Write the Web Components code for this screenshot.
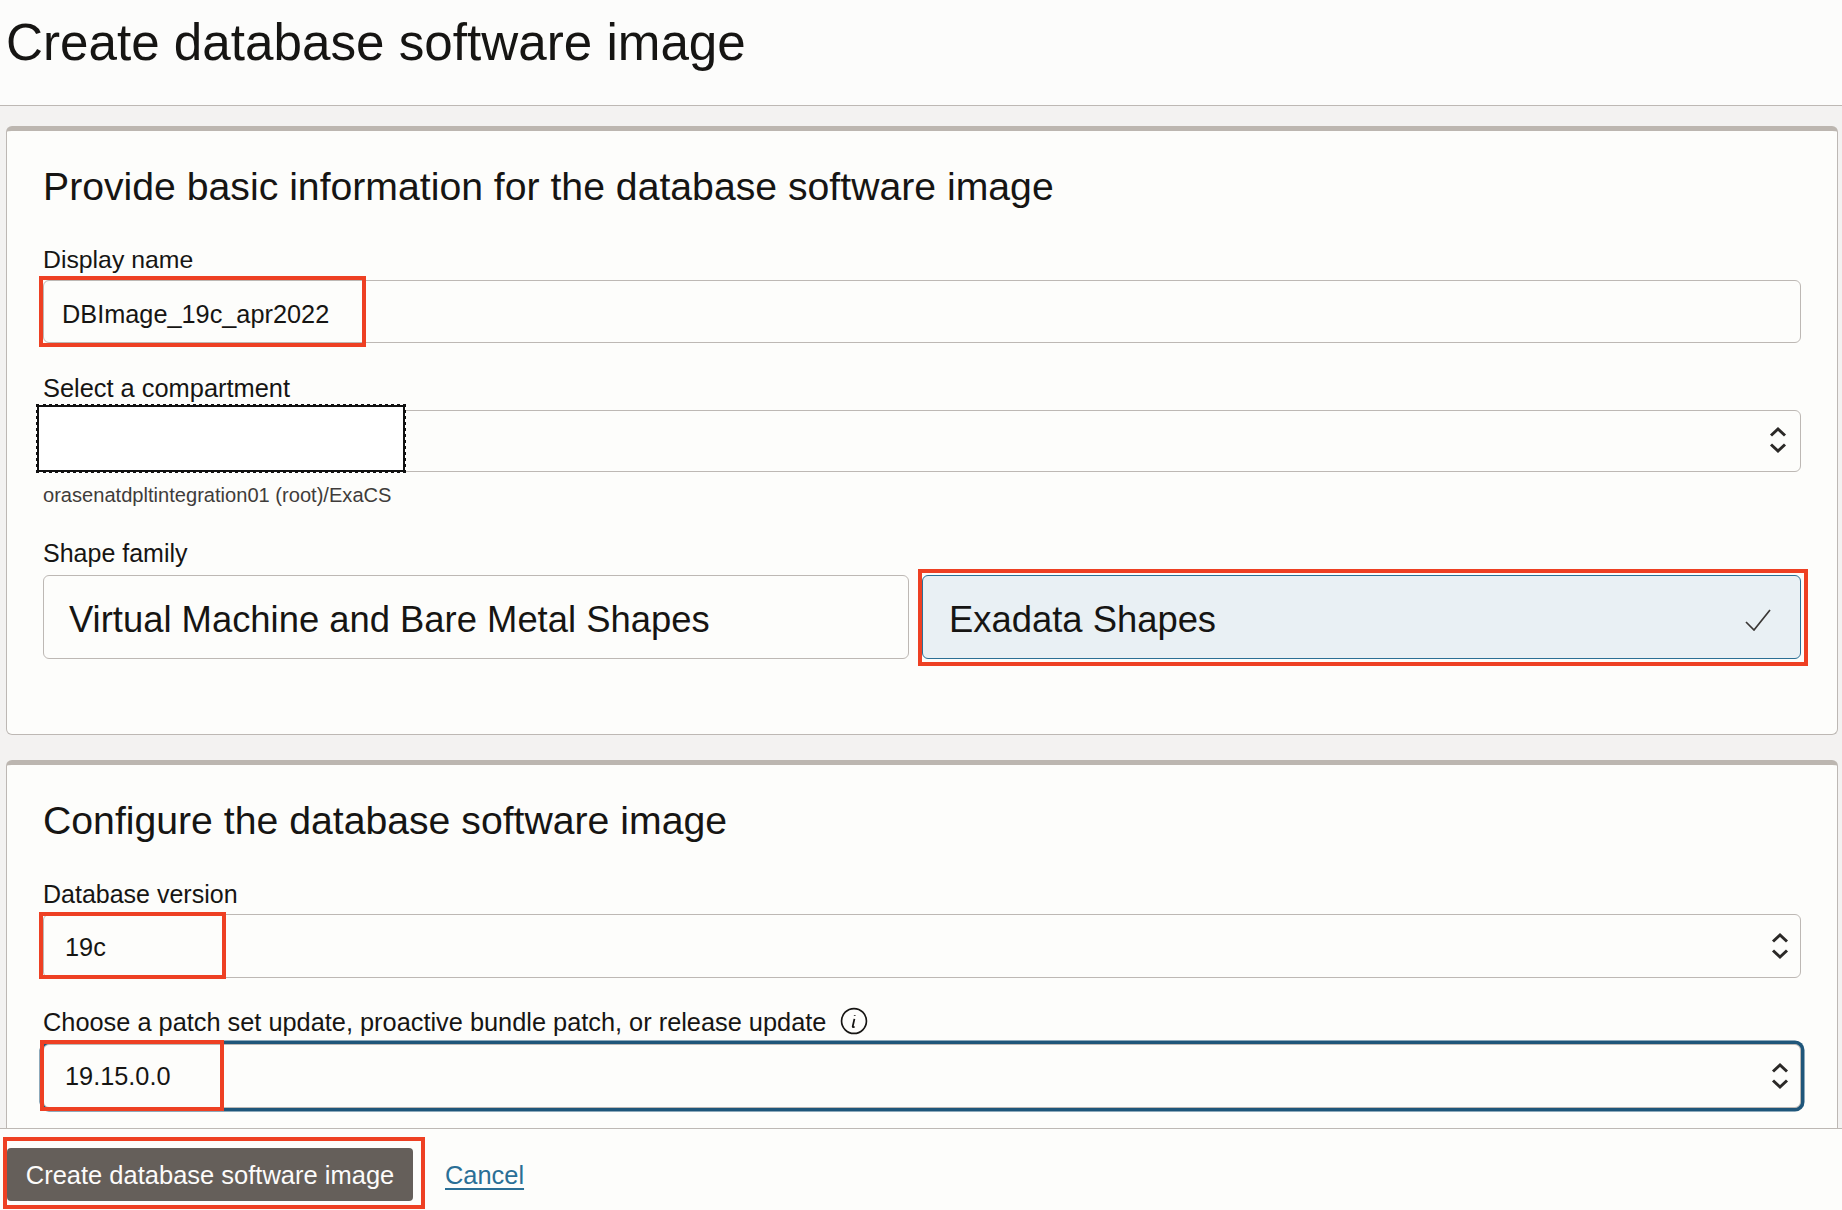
<!DOCTYPE html>
<html lang="en">
<head>
<meta charset="utf-8">
<title>Create database software image</title>
<style>
  html, body { margin: 0; height: 100%; }
  body {
    display: flex;
    flex-direction: column;
    height: 1210px;
    overflow: hidden;
    font-family: "Liberation Sans", Arial, sans-serif;
    color: #161513;
    background: #f3f2f1;
  }
  page-body { flex: 1; min-height: 0; }
</style>
</head>
<body>

<page-header>Create database software image</page-header>

<page-body>
  <form-card heading="Provide basic information for the database software image" style="--bottom: 75px">
    <form-field label="Display name" value="DBImage_19c_apr2022" gap="6" height="63" value-left="18" style="--value-top: 5px; --label-size: 24.8px">
      <mark-box slot="mark" style="left:-5px;top:-5px;width:327px;height:71px"></mark-box>
    </form-field>
    <form-field label="Select a compartment" select gap="8" height="62" style="--top: 31px; --arrow-y: -2px; --arrow-right: 12px; --label-size: 25.4px" help="orasenatdpltintegration01 (root)/ExaCS">
      <redact-box slot="mark" style="left:-8px;top:-7px;width:370px;height:69px"></redact-box>
    </form-field>
    <shape-picker label="Shape family">
      <shape-option>Virtual Machine and Bare Metal Shapes</shape-option>
      <shape-option selected>Exadata Shapes
        <mark-box slot="mark" style="left:-5px;top:-7px;width:890px;height:97px"></mark-box>
      </shape-option>
    </shape-picker>
  </form-card>

  <form-card heading="Configure the database software image" style="--top: 25px; --bottom: 40px">
    <form-field label="Database version" value="19c" select gap="6" height="64" style="--value-top: 2px; --label-size: 25px">
      <mark-box slot="mark" style="left:-5px;top:-3px;width:187px;height:67px"></mark-box>
    </form-field>
    <form-field label="Choose a patch set update, proactive bundle patch, or release update" value="19.15.0.0" select focused info gap="8" height="64" style="--top: 30px; --label-size: 25.35px">
      <mark-box slot="mark" style="left:-4px;top:-5px;width:184px;height:71px"></mark-box>
    </form-field>
  </form-card>
</page-body>

<page-footer>
  <action-button>Create database software image
    <mark-box slot="mark" style="left:-4px;top:-11px;width:422px;height:72px"></mark-box>
  </action-button>
  <a slot="link" href="#">Cancel</a>
</page-footer>

<script>
  customElements.define(
    "page-header",
    class extends HTMLElement {
      constructor() {
        super();
        this.attachShadow({ mode: "open" }).innerHTML = /*html*/ `
          <style>
            :host {
              display: block;
              flex: none;
              height: 105px;
              box-sizing: content-box;
              border-bottom: 1px solid #bdb8b4;
              background: #fcfcfb;
            }
            h1 {
              margin: 0;
              padding: 15px 0 0 6px;
              font-size: 51.2px;
              line-height: 56px;
              font-weight: 400;
            }
          </style>
          <h1><slot></slot></h1>
        `;
      }
    }
  );

  customElements.define(
    "page-body",
    class extends HTMLElement {
      constructor() {
        super();
        this.attachShadow({ mode: "open" }).innerHTML = /*html*/ `
          <style>
            :host {
              display: block;
              padding: 20px 4px 0 6px;
              overflow: hidden;
            }
          </style>
          <slot></slot>
        `;
      }
    }
  );

  customElements.define(
    "form-card",
    class extends HTMLElement {
      constructor() {
        super();
        this.attachShadow({ mode: "open" }).innerHTML = /*html*/ `
          <style>
            :host {
              display: block;
              margin-top: var(--top, 0);
              padding: 34px 36px var(--bottom, 40px) 36px;
              background: #fdfdfb;
              border: 1px solid #bdb8b4;
              border-top: 5px solid #bcb6b0;
              border-radius: 6px;
            }
            h2 {
              margin: 0 0 37px;
              font-size: 39.2px;
              line-height: 44px;
              font-weight: 400;
            }
          </style>
          <h2></h2>
          <slot></slot>
        `;
      }

      connectedCallback() {
        this.shadowRoot.querySelector("h2").textContent = this.getAttribute("heading");
      }
    }
  );

  customElements.define(
    "form-field",
    class extends HTMLElement {
      constructor() {
        super();
        this.attachShadow({ mode: "open" }).innerHTML = /*html*/ `
          <style>
            :host {
              display: block;
              margin-top: var(--top, 0);
            }
            .label {
              display: flex;
              align-items: center;
              gap: 14px;
              font-size: var(--label-size, 25.2px);
              line-height: 28px;
            }
            .info { display: none; width: 28px; height: 28px; margin-top: -2px; }
            :host([info]) .info { display: block; }
            .control {
              position: relative;
              display: flex;
              align-items: center;
              justify-content: space-between;
              box-sizing: border-box;
              padding: 0 var(--arrow-right, 10px) 0 21px;
              background: #fdfdfb;
              border: 1px solid #bdb8b4;
              border-radius: 6px;
              font-size: 25.3px;
            }
            .value { margin-top: var(--value-top, 0); }
            :host([focused]) .control { box-shadow: 0 0 0 3.5px #1f567a; }
            .arrows {
              display: none;
              width: 20px;
              height: 34px;
              margin-top: var(--arrow-y, 0);
              filter: blur(.4px);
            }
            :host([select]) .arrows { display: block; }
            .help {
              display: none;
              margin-top: 10px;
              font-size: 20.1px;
              line-height: 26px;
              color: #3f3c3a;
            }
            :host([help]) .help { display: block; }
          </style>
          <div class="label">
            <span class="text"></span>
            <svg class="info" viewBox="0 0 27 27" fill="none" stroke="#161513">
              <circle cx="13.5" cy="13.5" r="12" stroke-width="1.6"/>
              <path d="M14.2 7.6v.9M13.9 11.5l-1.6 7c-.2 1 .5 1.3 1.8.4" stroke-width="1.7"/>
            </svg>
          </div>
          <div class="control">
            <span class="value"></span>
            <svg class="arrows" viewBox="0 0 20 34" fill="none" stroke="#2b2927" stroke-width="3">
              <path d="M3 12.5l7-6.5 7 6.5M3 21.5l7 6.5 7-6.5"/>
            </svg>
            <slot name="mark"></slot>
          </div>
          <div class="help"></div>
        `;
      }

      connectedCallback() {
        const root = this.shadowRoot;
        root.querySelector(".text").textContent = this.getAttribute("label");
        root.querySelector(".value").textContent = this.getAttribute("value") ?? "";
        root.querySelector(".help").textContent = this.getAttribute("help") ?? "";
        root.querySelector(".label").style.marginBottom = `${this.getAttribute("gap") ?? 6}px`;
        root.querySelector(".control").style.height = `${this.getAttribute("height") ?? 63}px`;
        if (this.hasAttribute("value-left")) {
          root.querySelector(".control").style.paddingLeft = `${this.getAttribute("value-left")}px`;
        }
      }
    }
  );

  customElements.define(
    "shape-picker",
    class extends HTMLElement {
      constructor() {
        super();
        this.attachShadow({ mode: "open" }).innerHTML = /*html*/ `
          <style>
            :host { display: block; margin-top: 31px; }
            .label { margin-bottom: 8px; font-size: 25px; line-height: 28px; }
            .options { display: grid; grid-template-columns: 866px 879px; gap: 13px; }
          </style>
          <div class="label"></div>
          <div class="options"><slot></slot></div>
        `;
      }

      connectedCallback() {
        this.shadowRoot.querySelector(".label").textContent = this.getAttribute("label");
      }
    }
  );

  customElements.define(
    "shape-option",
    class extends HTMLElement {
      constructor() {
        super();
        this.attachShadow({ mode: "open" }).innerHTML = /*html*/ `
          <style>
            :host {
              position: relative;
              display: flex;
              align-items: center;
              justify-content: space-between;
              box-sizing: border-box;
              height: 84px;
              padding: 0 29px 0 25px;
              background: #fdfdfb;
              border: 1px solid #bdb8b4;
              border-radius: 6px;
              font-size: 36.4px;
            }
            :host([selected]) {
              padding-left: 26px;
              background: #e9f0f4;
              border-color: #2b6f94;
            }
            span { margin-top: 5px; }
            svg { display: none; width: 26px; height: 22px; margin-top: 5px; }
            :host([selected]) svg { display: block; }
          </style>
          <span><slot></slot></span>
          <svg viewBox="0 0 26 22" fill="none" stroke="#3a3735" stroke-width="1.7">
            <path d="M1 13l8 8L25 1"/>
          </svg>
          <slot name="mark"></slot>
        `;
      }
    }
  );

  // Red annotation frame drawn on the screenshot
  customElements.define(
    "mark-box",
    class extends HTMLElement {
      constructor() {
        super();
        this.attachShadow({ mode: "open" }).innerHTML = /*html*/ `
          <style>
            :host {
              position: absolute;
              box-sizing: border-box;
              border: 4px solid #ee4023;
              pointer-events: none;
            }
          </style>
        `;
      }
    }
  );

  // Hand drawn box hiding the compartment name
  customElements.define(
    "redact-box",
    class extends HTMLElement {
      constructor() {
        super();
        this.attachShadow({ mode: "open" }).innerHTML = /*html*/ `
          <style>
            :host {
              position: absolute;
              box-sizing: border-box;
              background: #fff;
              border: 3px dotted #111;
              outline: 2px solid #111;
              outline-offset: -3px;
            }
          </style>
        `;
      }
    }
  );

  customElements.define(
    "action-button",
    class extends HTMLElement {
      constructor() {
        super();
        this.attachShadow({ mode: "open" }).innerHTML = /*html*/ `
          <style>
            :host {
              position: relative;
              display: flex;
              align-items: center;
              justify-content: center;
              width: 406px;
              height: 53px;
              padding-top: 2px;
              box-sizing: border-box;
              background: #655f5a;
              border-radius: 4px;
              color: #fcfbfa;
              font-size: 25.5px;
            }
          </style>
          <slot></slot>
          <slot name="mark"></slot>
        `;
      }
    }
  );

  customElements.define(
    "page-footer",
    class extends HTMLElement {
      constructor() {
        super();
        this.attachShadow({ mode: "open" }).innerHTML = /*html*/ `
          <style>
            :host {
              display: flex;
              flex: none;
              align-items: center;
              gap: 32px;
              height: 82px;
              padding: 10px 0 0 7px;
              box-sizing: border-box;
              border-top: 1px solid #bdb8b4;
              background: #fdfdfb;
            }
            ::slotted(a) {
              margin-top: 2px;
              color: #2a6f96;
              font-size: 25.4px;
              text-underline-offset: 4px;
            }
          </style>
          <slot></slot>
          <slot name="link"></slot>
        `;
      }
    }
  );
</script>
</body>
</html>
